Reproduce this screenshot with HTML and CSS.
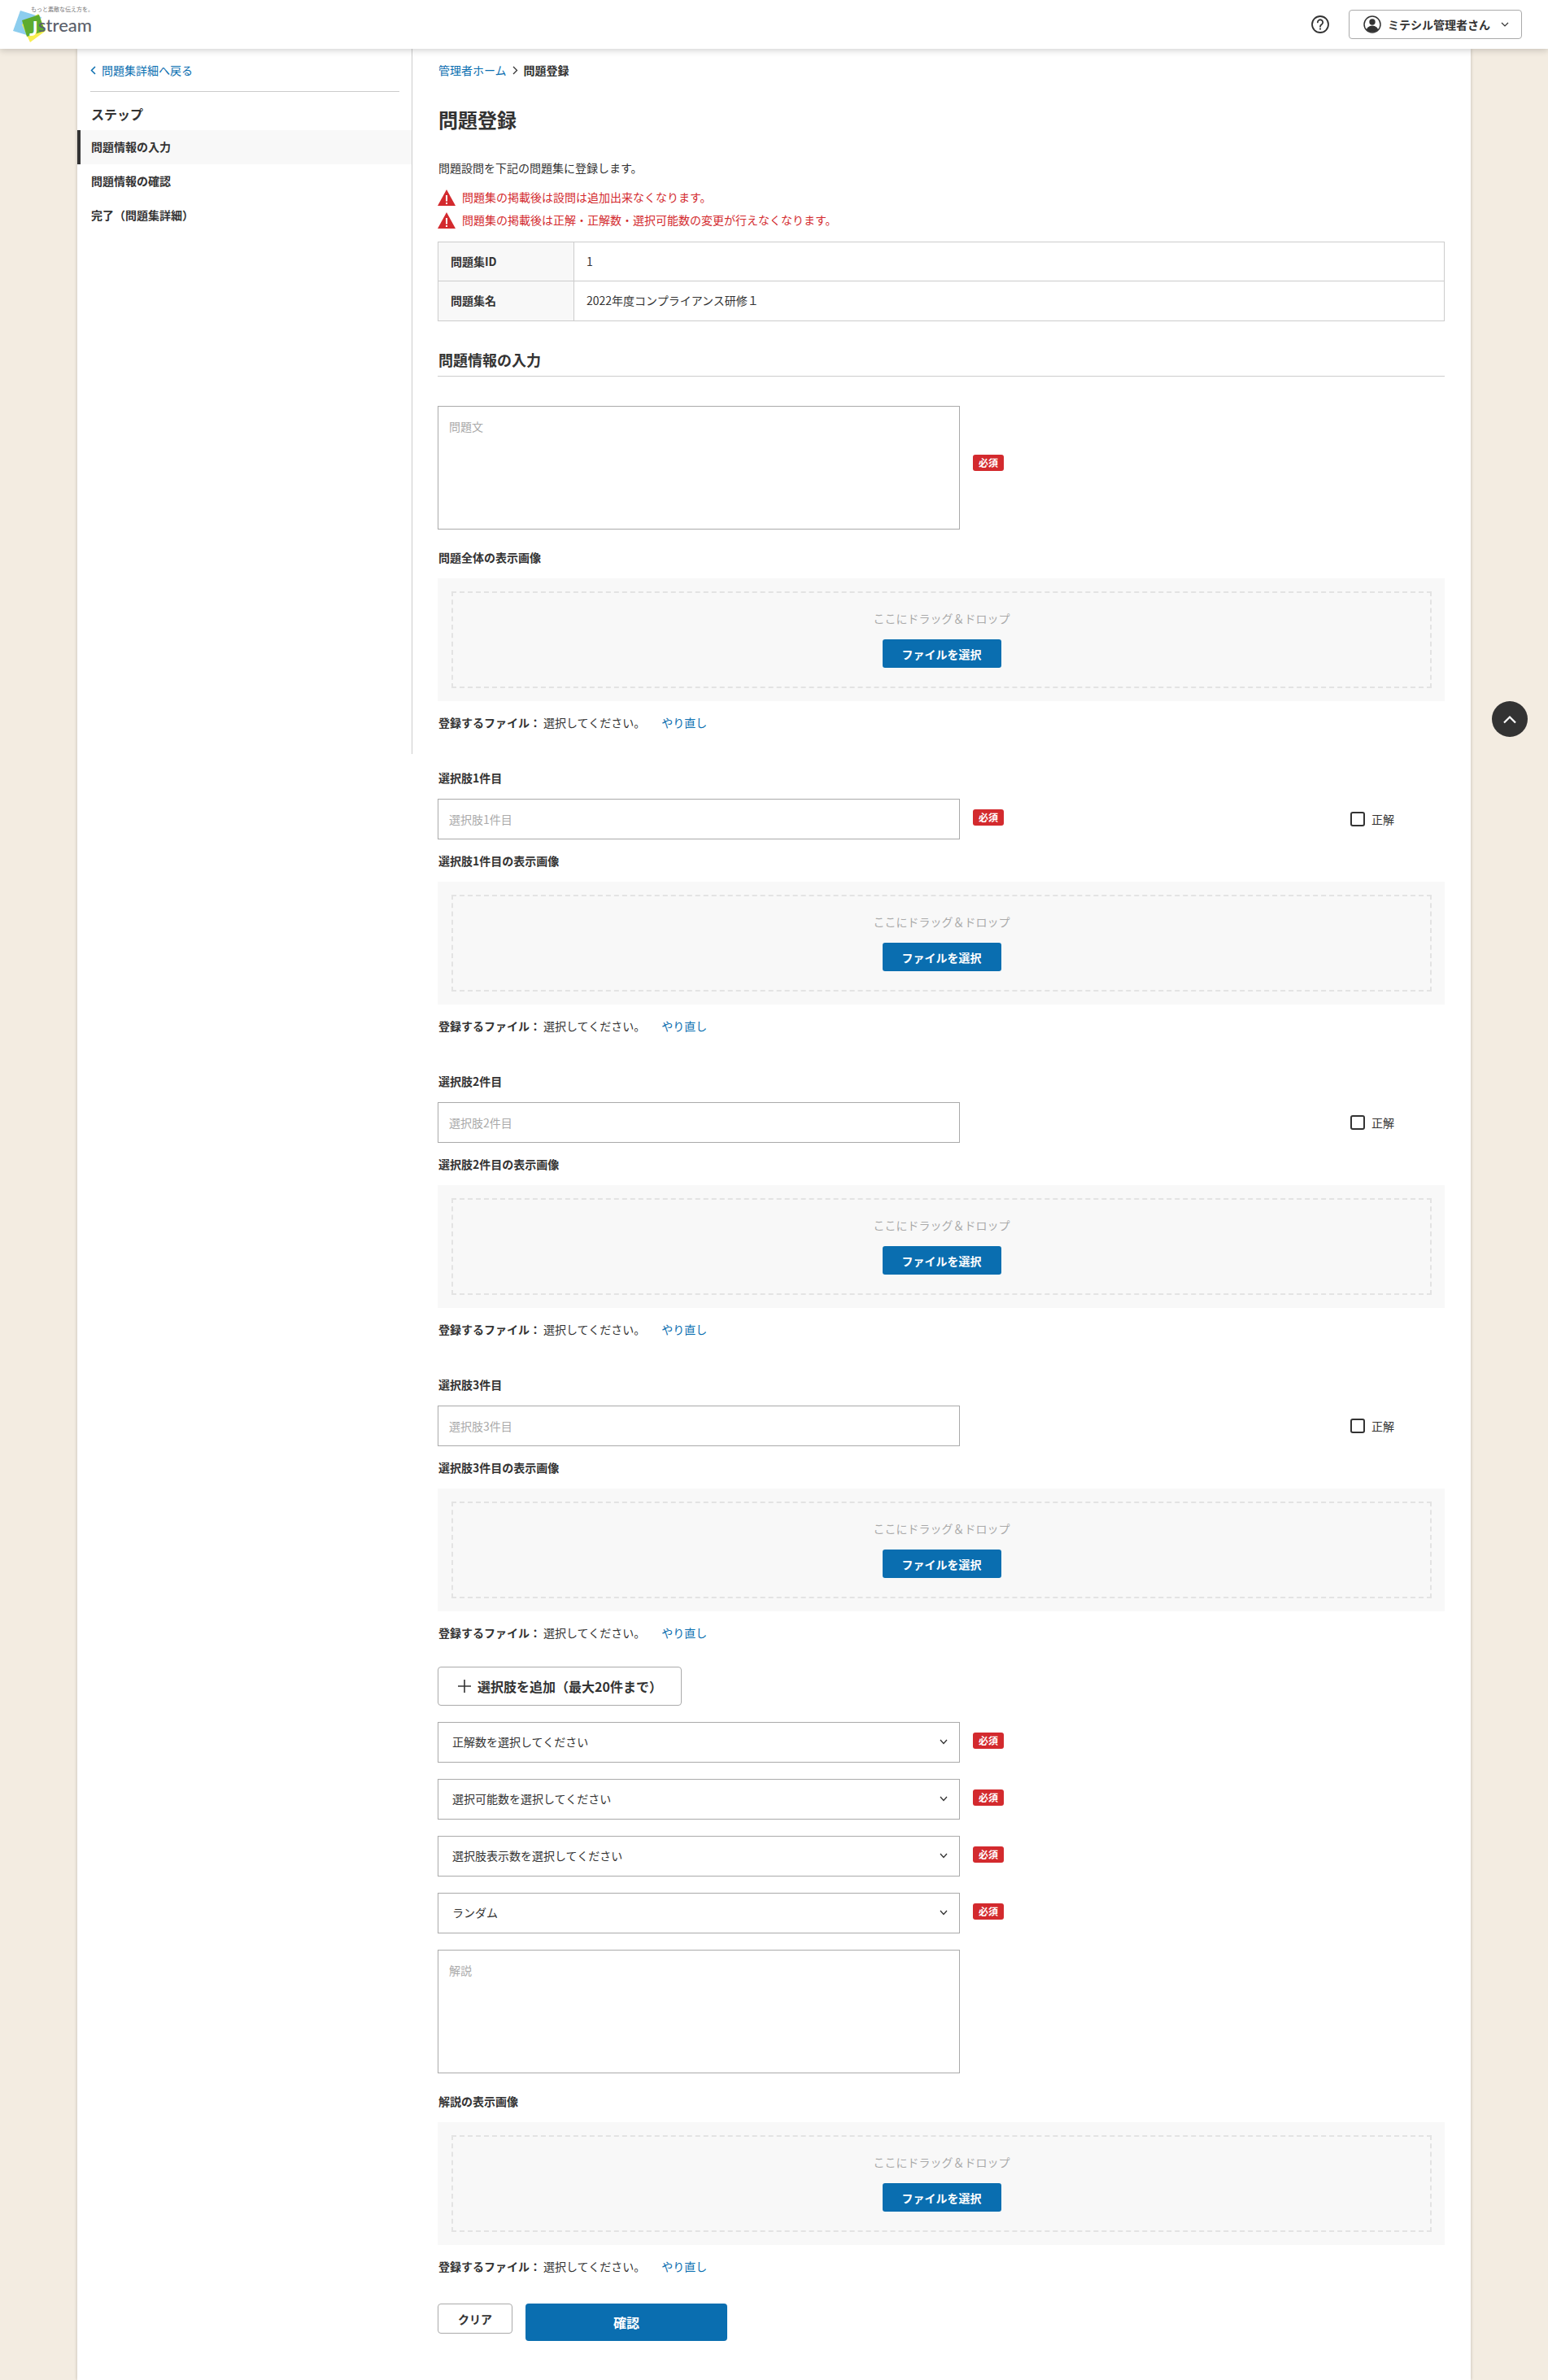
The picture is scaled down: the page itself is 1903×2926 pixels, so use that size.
FILE: index.html
```html
<!DOCTYPE html>
<html lang="ja">
<head>
<meta charset="utf-8">
<title>問題登録</title>
<link rel="stylesheet" href="styles.css">
</head>
<body>
<header class="topbar">
  <a class="logo" href="#">
    <svg class="logo-mark" width="56" height="54" viewBox="0 0 56 54">
      <polygon points="25,13 51,21 43,46 16,38" fill="#8ccdee"/>
      <polygon points="47,17 56,38 37,52 27,30" fill="#f8ee50"/>
      <polygon points="27,25 48,18 55,38 33,45" fill="#5dab2f"/>
    </svg>
    <span class="logo-tag">もっと素敵な伝え方を。</span>
    <span class="logo-j">J</span>
    <span class="logo-word">stream</span>
  </a>
  <div class="topbar-right">
    <svg class="help" width="24" height="24" viewBox="0 0 24 24" fill="none" stroke="#333" stroke-width="1.8">
      <circle cx="12" cy="12" r="10"/>
      <path d="M8.8 9.4a3.2 3.2 0 1 1 5 2.7c-1.2.8-1.8 1.4-1.8 2.7" stroke-linecap="round"/>
      <circle cx="12" cy="17.6" r="1.1" fill="#333" stroke="none"/>
    </svg>
    <button class="user-btn" type="button">
      <svg width="22" height="22" viewBox="0 0 22 22">
        <defs><clipPath id="uc"><circle cx="11" cy="11" r="9.6"/></clipPath></defs>
        <circle cx="11" cy="8" r="3.7" fill="#333"/>
        <ellipse cx="11" cy="19" rx="7.5" ry="6.5" fill="#333" clip-path="url(#uc)"/>
        <circle cx="11" cy="11" r="10" fill="none" stroke="#333" stroke-width="1.5"/>
      </svg>
      <span class="user-name">ミテシル管理者さん</span>
      <svg class="user-caret" width="10" height="6" viewBox="0 0 10 6" fill="none" stroke="#333" stroke-width="1.2"><path d="M1 1l4 4 4-4"/></svg>
    </button>
  </div>
</header>

<div class="page">
  <aside class="side">
    <a class="back" href="#">
      <svg width="7" height="11" viewBox="0 0 7 11" fill="none" stroke="#0a6eb0" stroke-width="1.5"><path d="M6 1L1.5 5.5 6 10"/></svg>
      問題集詳細へ戻る
    </a>
    <div class="side-rule"></div>
    <h3 class="side-title">ステップ</h3>
    <ul class="steps">
      <li class="step step-on">問題情報の入力</li>
      <li class="step">問題情報の確認</li>
      <li class="step">完了（問題集詳細）</li>
    </ul>
  </aside>

  <main class="main">
    <nav class="crumbs">
      <a href="#">管理者ホーム</a>
      <svg width="7" height="11" viewBox="0 0 7 11" fill="none" stroke="#333" stroke-width="1.3"><path d="M1 1l4.5 4.5L1 10"/></svg>
      <b>問題登録</b>
    </nav>
    <h1 class="title">問題登録</h1>
    <p class="lead">問題設問を下記の問題集に登録します。</p>
    <div class="warns">
      <div class="warn">
        <svg width="22" height="20" viewBox="0 0 22 20"><path d="M11 0L22 20H0z" fill="#d32a2e"/><rect x="10" y="7" width="2" height="7.5" fill="#fff"/><rect x="10" y="16" width="2" height="2" fill="#fff"/></svg>
        <span class="warn-text">問題集の掲載後は設問は追加出来なくなります。</span>
      </div>
      <div class="warn">
        <svg width="22" height="20" viewBox="0 0 22 20"><path d="M11 0L22 20H0z" fill="#d32a2e"/><rect x="10" y="7" width="2" height="7.5" fill="#fff"/><rect x="10" y="16" width="2" height="2" fill="#fff"/></svg>
        <span class="warn-text">問題集の掲載後は正解・正解数・選択可能数の変更が行えなくなります。</span>
      </div>
    </div>
    <table class="info">
      <tr><th>問題集ID</th><td>1</td></tr>
      <tr class="info-tall"><th>問題集名</th><td>2022年度コンプライアンス研修１</td></tr>
    </table>
    <h2 class="section">問題情報の入力</h2>

    <div class="row row-area">
      <textarea class="area" placeholder="問題文"></textarea>
      <span class="req req-area">必須</span>
    </div>

    <div class="label label-gap">問題全体の表示画像</div>
    <div class="drop"><div class="drop-in"><span class="drop-text">ここにドラッグ＆ドロップ</span><button class="file-btn" type="button">ファイルを選択</button></div></div>
    <div class="file-line"><b>登録するファイル：</b><span class="file-state">選択してください。</span><a href="#">やり直し</a></div>

    <section class="choice">
      <div class="label">選択肢1件目</div>
      <div class="row row-field">
        <input class="text" type="text" placeholder="選択肢1件目">
        <span class="req">必須</span>
        <label class="correct"><span class="box"></span>正解</label>
      </div>
      <div class="label label-sub">選択肢1件目の表示画像</div>
      <div class="drop"><div class="drop-in"><span class="drop-text">ここにドラッグ＆ドロップ</span><button class="file-btn" type="button">ファイルを選択</button></div></div>
      <div class="file-line"><b>登録するファイル：</b><span class="file-state">選択してください。</span><a href="#">やり直し</a></div>
    </section>

    <section class="choice">
      <div class="label">選択肢2件目</div>
      <div class="row row-field">
        <input class="text" type="text" placeholder="選択肢2件目">
        <label class="correct"><span class="box"></span>正解</label>
      </div>
      <div class="label label-sub">選択肢2件目の表示画像</div>
      <div class="drop"><div class="drop-in"><span class="drop-text">ここにドラッグ＆ドロップ</span><button class="file-btn" type="button">ファイルを選択</button></div></div>
      <div class="file-line"><b>登録するファイル：</b><span class="file-state">選択してください。</span><a href="#">やり直し</a></div>
    </section>

    <section class="choice">
      <div class="label">選択肢3件目</div>
      <div class="row row-field">
        <input class="text" type="text" placeholder="選択肢3件目">
        <label class="correct"><span class="box"></span>正解</label>
      </div>
      <div class="label label-sub">選択肢3件目の表示画像</div>
      <div class="drop"><div class="drop-in"><span class="drop-text">ここにドラッグ＆ドロップ</span><button class="file-btn" type="button">ファイルを選択</button></div></div>
      <div class="file-line"><b>登録するファイル：</b><span class="file-state">選択してください。</span><a href="#">やり直し</a></div>
    </section>

    <button class="add" type="button">
      <svg width="18" height="18" viewBox="0 0 18 18" stroke="#333" stroke-width="1.6"><path d="M9 1v16M1 9h16"/></svg>
      選択肢を追加（最大20件まで）
    </button>

    <div class="selects">
      <div class="row">
        <div class="select"><span>正解数を選択してください</span><svg width="10" height="7" viewBox="0 0 10 7" fill="none" stroke="#333" stroke-width="1.3"><path d="M1 1l4 4.5L9 1"/></svg></div>
        <span class="req">必須</span>
      </div>
      <div class="row">
        <div class="select"><span>選択可能数を選択してください</span><svg width="10" height="7" viewBox="0 0 10 7" fill="none" stroke="#333" stroke-width="1.3"><path d="M1 1l4 4.5L9 1"/></svg></div>
        <span class="req">必須</span>
      </div>
      <div class="row">
        <div class="select"><span>選択肢表示数を選択してください</span><svg width="10" height="7" viewBox="0 0 10 7" fill="none" stroke="#333" stroke-width="1.3"><path d="M1 1l4 4.5L9 1"/></svg></div>
        <span class="req">必須</span>
      </div>
      <div class="row">
        <div class="select"><span>ランダム</span><svg width="10" height="7" viewBox="0 0 10 7" fill="none" stroke="#333" stroke-width="1.3"><path d="M1 1l4 4.5L9 1"/></svg></div>
        <span class="req">必須</span>
      </div>
      <div class="row">
        <textarea class="area" placeholder="解説"></textarea>
      </div>
    </div>

    <div class="label label-gap">解説の表示画像</div>
    <div class="drop"><div class="drop-in"><span class="drop-text">ここにドラッグ＆ドロップ</span><button class="file-btn" type="button">ファイルを選択</button></div></div>
    <div class="file-line"><b>登録するファイル：</b><span class="file-state">選択してください。</span><a href="#">やり直し</a></div>

    <div class="actions">
      <button class="clear" type="button">クリア</button>
      <button class="confirm" type="button">確認</button>
    </div>
  </main>
</div>

<a class="to-top" href="#" aria-label="ページトップへ">
  <svg width="18" height="11" viewBox="0 0 18 11" fill="none" stroke="#fff" stroke-width="2.2"><path d="M2 9.5l7-7 7 7"/></svg>
</a>
</body>
</html>
```
FILE: styles.css
```css
* { box-sizing: border-box; }
html, body { margin: 0; padding: 0; }
body {
  background: #f3ece1;
  color: #333;
  font-family: "Noto Sans CJK JP", "Noto Sans", sans-serif;
  font-size: 14px;
  line-height: 20px;
}
a { color: #0a6eb0; text-decoration: none; }
button, input, textarea { font-family: inherit; color: inherit; }

/* header */
.topbar {
  position: relative;
  z-index: 2;
  height: 60px;
  background: #fff;
  box-shadow: 0 2px 8px rgba(0, 0, 0, .18);
  display: flex;
  align-items: center;
  justify-content: space-between;
  padding: 0 32px 0 0;
}
.logo { position: relative; display: block; width: 120px; height: 60px; }
.logo-mark { position: absolute; left: 0; top: 0; }
.logo-tag {
  position: absolute;
  left: 38px;
  top: 6px;
  font-size: 7px;
  line-height: 10px;
  color: #777;
  white-space: nowrap;
}
.logo-j {
  position: absolute;
  left: 36px;
  top: 20px;
  font: 700 25px/28px "Lato", sans-serif;
  color: #fff;
}
.logo-word {
  position: absolute;
  left: 47px;
  top: 17px;
  font: 500 22px/28px "Lato", sans-serif;
  color: #5a5f6b;
}
.topbar-right { display: flex; align-items: center; gap: 23px; }
.help { display: block; }
.user-btn {
  width: 213px;
  height: 36px;
  background: #fff;
  border: 1px solid #aaa;
  border-radius: 4px;
  display: flex;
  align-items: center;
  padding: 0 0 0 17px;
  font-size: 14px;
  font-weight: 700;
}
.user-name { margin-left: 8px; white-space: nowrap; }
.user-caret { margin-left: 13px; }

/* page column */
.page {
  width: 1713px;
  margin: 0 auto;
  background: #fff;
  box-shadow: 0 0 4px rgba(0, 0, 0, .22);
  display: flex;
  align-items: flex-start;
}
.side {
  width: 412px;
  height: 867px;
  flex: none;
  border-right: 1px solid #ccc;
  padding-top: 17px;
}
.back {
  display: flex;
  align-items: center;
  gap: 7px;
  margin-left: 16px;
  height: 20px;
  padding-bottom: 2px;
}
.side-rule { height: 1px; background: #ccc; margin: 15px 15px 0 16px; }
.side-title {
  margin: 16px 0 7px 17px;
  font-size: 16px;
  height: 24px;
  line-height: 22px;
  font-weight: 700;
}
.steps { list-style: none; margin: 0; padding: 0; }
.step {
  height: 42px;
  line-height: 40px;
  padding-left: 17px;
  font-weight: 700;
}
.step-on { background: #f8f8f8; border-left: 4px solid #333; padding-left: 13px; }

.main { flex: 1; min-width: 0; padding: 17px 32px 48px 31px; }
.crumbs { display: flex; align-items: center; gap: 7px; height: 20px; padding: 0 0 2px 1px; }
.crumbs b { font-weight: 700; }
.title { margin: 33px 0 0 1px; font-size: 24px; height: 36px; line-height: 34px; font-weight: 700; }
.lead { margin: 31px 0 0 1px; height: 20px; line-height: 18px; }
.warns { margin-top: 16px; display: flex; flex-direction: column; gap: 8px; }
.warn { display: flex; align-items: center; gap: 8px; color: #d32a2e; height: 20px; }
.warn-text { line-height: 18px; height: 20px; }

.info {
  width: 100%;
  margin-top: 16px;
  border-collapse: collapse;
  table-layout: fixed;
}
.info th, .info td { border: 1px solid #ccc; height: 48px; padding: 0 15px 2px; text-align: left; }
.info th { width: 167px; background: #f8f8f8; font-weight: 700; }
.info-tall th, .info-tall td { height: 49px; }
.section {
  margin: 35px 0 0;
  font-size: 18px;
  height: 33px;
  line-height: 24px;
  font-weight: 700;
  padding-left: 1px;
  border-bottom: 1px solid #ccc;
}

.row { display: flex; align-items: center; }
.row-area { margin-top: 36px; }
.row-field { margin-top: 15px; }
.area, .text, .select {
  width: 642px;
  flex: none;
  border: 1px solid #aaa;
  background: #fff;
  border-radius: 0;
  font-size: 14px;
  outline: none;
}
.area { display: block; height: 152px; padding: 14px 13px; line-height: 20px; resize: none; }
.text { height: 50px; padding: 0 13px; }
.area::placeholder, .text::placeholder { color: #aaa; opacity: 1; }
.req {
  width: 38px;
  height: 20px;
  margin: 0 0 4px 16px;
  flex: none;
  background: #d32a2e;
  color: #fff;
  border-radius: 3px;
  font-size: 12px;
  line-height: 20px;
  font-weight: 700;
  text-align: center;
}
.req-area { margin-bottom: 12px; }
.correct { margin-left: auto; margin-right: 62px; display: flex; align-items: center; gap: 8px; }
.box { width: 18px; height: 18px; border: 2px solid #333; border-radius: 3px; background: #fff; }

.label { font-weight: 700; height: 20px; line-height: 18px; padding-left: 1px; }
.label-gap { margin-top: 25px; }
.label-sub { margin-top: 17px; }
.drop { margin-top: 15px; background: #f8f8f8; padding: 16px 16px 16px 17px; height: 151px; }
.drop-in {
  height: 100%;
  border: 2px dashed #e3e3e3;
  display: flex;
  flex-direction: column;
  align-items: center;
  padding-top: 22px;
}
.drop-text { color: #aaa; height: 20px; line-height: 18px; }
.file-btn {
  margin-top: 15px;
  width: 146px;
  height: 35px;
  border: 0;
  border-radius: 3px;
  background: #0a6eb0;
  color: #fff;
  font-size: 14px;
  font-weight: 700;
}
.file-line { margin-top: 17px; height: 20px; line-height: 18px; padding-left: 1px; }
.file-line b { font-weight: 700; }
.file-state { margin-left: 3px; }
.file-line a { margin-left: 20px; }
.choice { margin-top: 48px; }

.add {
  margin-top: 31px;
  width: 300px;
  height: 48px;
  background: #fff;
  border: 1px solid #aaa;
  border-radius: 4px;
  display: flex;
  align-items: center;
  gap: 7px;
  padding: 0 0 0 23px;
  font-size: 16px;
  font-weight: 700;
  white-space: nowrap;
}
.selects { margin-top: 20px; display: flex; flex-direction: column; gap: 20px; }
.select {
  height: 50px;
  display: flex;
  align-items: center;
  justify-content: space-between;
  padding: 0 14px 2px 17px;
}

.actions { margin-top: 35px; display: flex; align-items: flex-start; gap: 16px; }
.clear {
  width: 92px;
  height: 37px;
  background: #fff;
  border: 1px solid #aaa;
  border-radius: 4px;
  font-size: 14px;
  font-weight: 700;
}
.confirm {
  width: 248px;
  height: 46px;
  border: 0;
  border-radius: 4px;
  background: #0a6eb0;
  color: #fff;
  font-size: 16px;
  font-weight: 700;
}

.to-top {
  position: fixed;
  right: 25px;
  top: 862px;
  width: 44px;
  height: 44px;
  border-radius: 50%;
  background: #333;
  display: flex;
  align-items: center;
  justify-content: center;
}
```
